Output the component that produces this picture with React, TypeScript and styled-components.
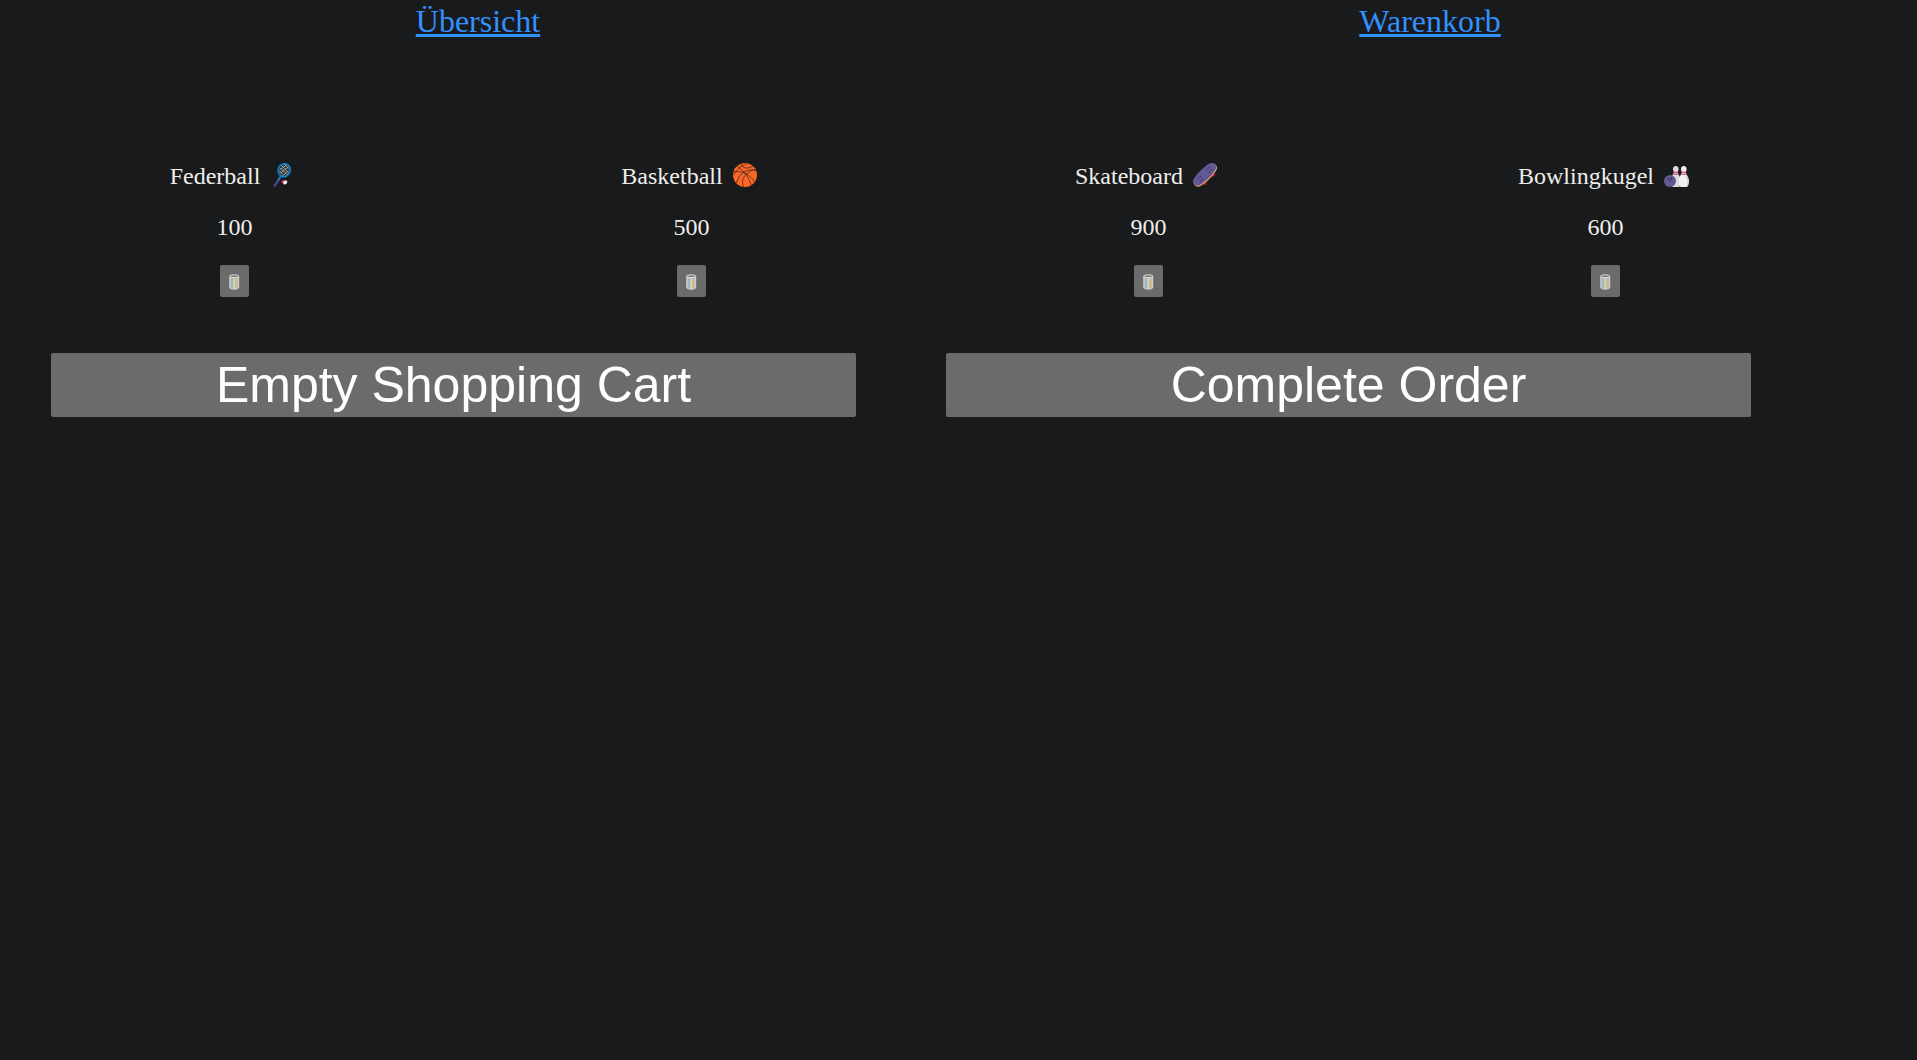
import React from "react";
import styled, { createGlobalStyle } from "styled-components";

const GlobalStyle = createGlobalStyle`
  body {
    margin: 0;
    background: #181a1b;
    color: #f0eeeb;
    font-family: "Liberation Serif", "Times New Roman", serif;
    font-size: 24px;
    line-height: 27px;
  }
`;

const Nav = styled.nav`
  display: grid;
  grid-template-columns: 1fr 1fr;
  padding: 3px 11px 0 2px;
  text-align: center;
  font-size: 32px;
  line-height: 37px;
`;

const NavLink = styled.a`
  color: #3391ff;
  text-decoration-thickness: 3px;
`;

const Products = styled.main`
  display: grid;
  grid-template-columns: repeat(4, 1fr);
  padding: 123px 83px 0 6px;
`;

const Product = styled.article`
  display: flex;
  flex-direction: column;
  align-items: center;
  gap: 24px;
`;

const Line = styled.p`
  display: flex;
  align-items: center;
  gap: 6px;
  margin: 0;
`;

const Emoji = styled.svg`
  width: 33px;
  height: 24px;
  margin-bottom: 3px;
`;

const Button = styled.button`
  border: 0;
  border-radius: 2px;
  background: #6b6b6b;
  color: #fff;
  font-family: "Liberation Sans", Arial, sans-serif;
  cursor: pointer;
`;

const RemoveButton = styled(Button)`
  display: flex;
  padding: 9px 6px 7px;
`;

const TrashIcon = styled.svg`
  width: 17px;
  height: 16px;
`;

const Actions = styled.section`
  display: grid;
  grid-template-columns: 1fr 1fr;
  gap: 90px;
  padding: 56px 166px 0 51px;
`;

const ActionButton = styled(Button)`
  padding: 3px 6px;
  font-size: 50px;
  line-height: 58px;
`;

const Racket = () => (
  <Emoji viewBox="0 0 33 24" aria-hidden="true">
    <path d="M8.8 22.5 12.5 17" stroke="#49408a" strokeWidth="2.6" strokeLinecap="round" />
    <path d="m12.2 17.2 3-4.4" stroke="#0a83ca" strokeWidth="2" />
    <ellipse cx="18.2" cy="7.2" rx="6" ry="6.6" transform="rotate(24 18.2 7.2)" fill="#303438" stroke="#0a83ca" strokeWidth="1.6" />
    <path d="m14.500 5 7 7M15.500 2.500l7 7M13.500 8l4 4M18.500 1.500l4 4M14.500 10l8-6M13.500 7l7-5M16.500 13l6-5" stroke="#c4c8ca" strokeWidth=".7" />
    <path d="m15.800 17.300 2.800-.3-.7 4c-1.800-.4-3-1.900-2.100-3.700Z" fill="#e31b78" />
    <path d="m17 19.500 2-2.200 2.300.8-.5 2.500-2.600 1.200Z" fill="#f2f2f2" />
  </Emoji>
);

const Basketball = () => (
  <Emoji viewBox="0 0 33 24" aria-hidden="true">
    <circle cx="16" cy="12" r="12" fill="#ff6723" />
    <path d="M4.5 9c9-2 17 3 21 10M8 3c7 5 12 11 14 19M4.5 12C8 6 12 3 18 .5M27 7.5C18 5 10 10 7.5 20M14.5 24c-3-8 1-14 12-18M12 .7c1 4 5 6 12 2.5" fill="none" stroke="#402a32" strokeWidth=".8" />
  </Emoji>
);

const Skateboard = () => (
  <Emoji viewBox="0 0 33 24" aria-hidden="true">
    <circle cx="15.8" cy="20.3" r="1.6" fill="#ca0b4a" />
    <circle cx="24.5" cy="12" r="1.6" fill="#ca0b4a" />
    <path d="M4.5 18.500C4.500 15 17.500 1.700 22.500.5c3-.6 5.500 1.500 5.500 4.500C28 9.500 14.500 23 9.200 23.700 6.500 24 4.500 21.500 4.500 18.500Z" fill="#f3ad61" />
    <path d="M4 18C4 14.500 16.800 1.200 21.900 0c3-.5 5.300 1.200 5.300 4.200C27.200 8.800 13.900 21.900 8.700 22.700 6 23 4 21 4 18Z" fill="#635994" />
    <g fill="#32264e">
      <circle cx="9" cy="15.500" r=".7" /><circle cx="11.500" cy="18" r=".7" />
      <circle cx="11.200" cy="13.500" r=".7" /><circle cx="13.600" cy="16" r=".7" />
      <circle cx="18" cy="6.800" r=".7" /><circle cx="20.400" cy="9.200" r=".7" />
      <circle cx="20" cy="4.800" r=".7" /><circle cx="22.400" cy="7.200" r=".7" />
    </g>
  </Emoji>
);

const Bowling = () => (
  <Emoji viewBox="0 0 33 24" aria-hidden="true">
    <path d="M13.800 9c-1.700-3.300-.5-6 2-6s3.700 2.700 2 6c.1 3 3.300 4.500 3.300 9.200 0 4-1.700 6.300-3.300 6.300h-4c-1.700 0-3.300-2.300-3.300-6.300 0-4.700 3.200-6.200 3.300-9.200Z" fill="#dddadd" />
    <path d="M21.800 9c-1.700-3.300-.5-6 2-6s3.700 2.700 2 6c.1 3 3.200 4.500 3.200 9.200 0 4-1.700 6.300-3.400 6.300h-3.600c-1.700 0-3.400-2.300-3.400-6.300 0-4.700 3.100-6.200 3.200-9.200Z" fill="#f2f0f2" />
    <path d="M13.800 9.200h4.100M13.700 11.200h4.500M21.700 9.200h4.200M21.600 11.200h4.500" stroke="#d52458" strokeWidth="1" />
    <path d="M26 13.500q4 4.500.7 9.500" fill="none" stroke="#c9c4ca" strokeWidth="1" />
    <circle cx="10" cy="18" r="6" fill="#635994" />
    <circle cx="8.700" cy="15.800" r=".8" fill="#251b3c" />
    <circle cx="11.700" cy="15.500" r=".8" fill="#251b3c" />
    <circle cx="10.500" cy="17.800" r=".8" fill="#251b3c" />
  </Emoji>
);

const Trash = () => (
  <TrashIcon viewBox="0 0 17 16" aria-hidden="true">
    <path d="M3.800 2.500v11c0 2.200 8.900 2.200 8.900 0v-11Z" fill="#b8bdbc" stroke="#e2dfdb" strokeWidth=".9" />
    <path d="M6 4.500v10" stroke="#78b9dc" strokeWidth="1" />
    <path d="M8.200 4.500v10" stroke="#efda9c" strokeWidth="1.200" />
    <path d="M10.400 4.500v10" stroke="#e6b866" strokeWidth="1" />
    <ellipse cx="8.200" cy="2.200" rx="4.600" ry="1.300" fill="#696768" stroke="#eeeae7" strokeWidth="1" />
  </TrashIcon>
);

const products = [
  { name: "Federball", price: 100, Icon: Racket },
  { name: "Basketball", price: 500, Icon: Basketball },
  { name: "Skateboard", price: 900, Icon: Skateboard },
  { name: "Bowlingkugel", price: 600, Icon: Bowling },
];

export default function App() {
  return (
    <>
      <GlobalStyle />
      <Nav>
        <div><NavLink href="#uebersicht">Übersicht</NavLink></div>
        <div><NavLink href="#warenkorb">Warenkorb</NavLink></div>
      </Nav>
      <Products>
        {products.map(({ name, price, Icon }) => (
          <Product key={name}>
            <Line>{name}<Icon /></Line>
            <Line>{price}</Line>
            <RemoveButton type="button" aria-label={`${name} entfernen`}><Trash /></RemoveButton>
          </Product>
        ))}
      </Products>
      <Actions>
        <ActionButton type="button">Empty Shopping Cart</ActionButton>
        <ActionButton type="button">Complete Order</ActionButton>
      </Actions>
    </>
  );
}
